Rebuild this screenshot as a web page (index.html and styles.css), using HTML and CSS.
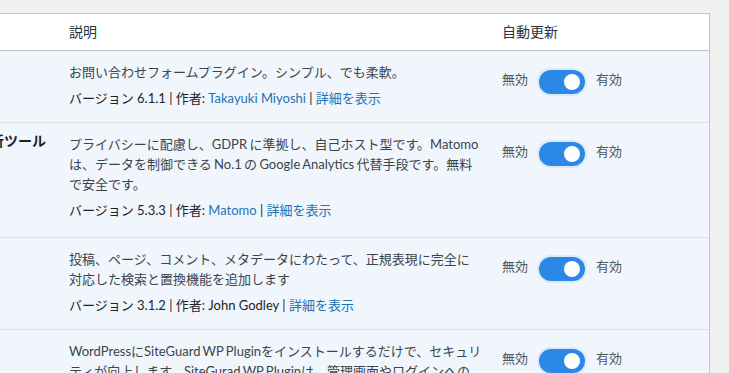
FILE: index.html
```html
<!DOCTYPE html>
<html lang="ja">
<head>
<meta charset="utf-8">
<title>プラグイン</title>
<link rel="stylesheet" href="styles.css">
</head>
<body>
<div class="page">
  <div class="plugins">
    <div class="row head">
      <div class="cell title"></div>
      <div class="cell desc">説明</div>
      <div class="cell auto">自動更新</div>
    </div>

    <div class="row active r1">
      <div class="cell title"></div>
      <div class="cell desc">
        <p class="text">お問い合わせフォームプラグイン。シンプル、でも柔軟。</p>
        <p class="meta">バージョン 6.1.1 | 作者: <a href="#">Takayuki Miyoshi</a> | <a href="#">詳細を表示</a></p>
      </div>
      <div class="cell auto">
        <span class="lbl">無効</span><span class="switch"><span class="knob"></span></span><span class="lbl">有効</span>
      </div>
    </div>

    <div class="row active r2">
      <div class="cell title"><strong class="name">Matomo Analytics – 倫理的なアクセス解析ツール</strong></div>
      <div class="cell desc">
        <p class="text">プライバシーに配慮し、GDPR に準拠し、自己ホスト型です。Matomo は、データを制御できる No.1 の Google Analytics 代替手段です。無料で安全です。</p>
        <p class="meta">バージョン 5.3.3 | 作者: <a href="#">Matomo</a> | <a href="#">詳細を表示</a></p>
      </div>
      <div class="cell auto">
        <span class="lbl">無効</span><span class="switch"><span class="knob"></span></span><span class="lbl">有効</span>
      </div>
    </div>

    <div class="row active r3">
      <div class="cell title"></div>
      <div class="cell desc">
        <p class="text">投稿、ページ、コメント、メタデータにわたって、正規表現に完全に対応した検索と置換機能を追加します</p>
        <p class="meta">バージョン 3.1.2 | 作者: John Godley | <a href="#">詳細を表示</a></p>
      </div>
      <div class="cell auto">
        <span class="lbl">無効</span><span class="switch"><span class="knob"></span></span><span class="lbl">有効</span>
      </div>
    </div>

    <div class="row active r4">
      <div class="cell title"></div>
      <div class="cell desc">
        <p class="text">WordPressにSiteGuard WP Pluginをインストールするだけで、セキュリティが向上します。SiteGurad WP Pluginは、管理画面やログインへの攻撃からサイトを守ります。</p>
      </div>
      <div class="cell auto">
        <span class="lbl">無効</span><span class="switch"><span class="knob"></span></span><span class="lbl">有効</span>
      </div>
    </div>
  </div>
</div>
</body>
</html>
```

FILE: styles.css
```css
html, body {
  margin: 0;
  padding: 0;
  background: #f0f0f1;
}

body {
  font-family: "Lato", "Noto Sans CJK JP", sans-serif;
  font-size: 13px;
  color: #3c434a;
  height: 373px;
  overflow: hidden;
}

.page {
  padding-top: 13px;
}

.plugins {
  width: 709px;
  background: #fff;
  border-top: 1px solid #c3c4c7;
  border-right: 1px solid #c3c4c7;
}

.row {
  display: grid;
  grid-template-columns: 59px 433px 1fr;
}

.head {
  background: #fff;
  border-bottom: 1px solid #c3c4c7;
}

.head .cell {
  padding: 8px 10px;
  line-height: 20px;
  font-size: 14px;
  color: #2c3338;
}

.active {
  background: #f0f6fc;
  border-bottom: 1px solid #dcdfe4;
}

.r1 { min-height: 71px; }
.r2 { min-height: 114px; }
.r3 { min-height: 90px; }
.r4 { min-height: 60px; }

.cell {
  line-height: 20px;
}

.title {
  padding: 8px 13px 0 0;
  display: flex;
  justify-content: flex-end;
  overflow: hidden;
  white-space: nowrap;
}

.name {
  font-size: 14px;
  font-weight: 700;
  color: #1d2327;
}

.desc {
  padding: 11px 10px 14px;
}

.desc p {
  margin: 0;
}

.desc p.text {
  word-spacing: -1px;
}

.desc p.meta {
  margin-top: 6px;
  color: #1d2327;
}

a {
  color: #2271b1;
  text-decoration: none;
}

.auto {
  padding: 17px 10px 0 10px;
  display: flex;
  align-items: flex-start;
  align-self: start;
  gap: 9px;
}

.head .auto {
  align-self: stretch;
  padding: 8px 10px;
}

.lbl {
  color: #50575e;
  margin-top: 1px;
}

.switch {
  position: relative;
  display: inline-block;
  width: 46px;
  height: 24px;
  margin: 2px;
  border-radius: 12px;
  background: #2c88e6;
  box-shadow: 0 0 0 2px #dce9f7;
}

.knob {
  position: absolute;
  top: 4px;
  right: 5px;
  width: 16px;
  height: 16px;
  border-radius: 50%;
  background: #fff;
}
```
